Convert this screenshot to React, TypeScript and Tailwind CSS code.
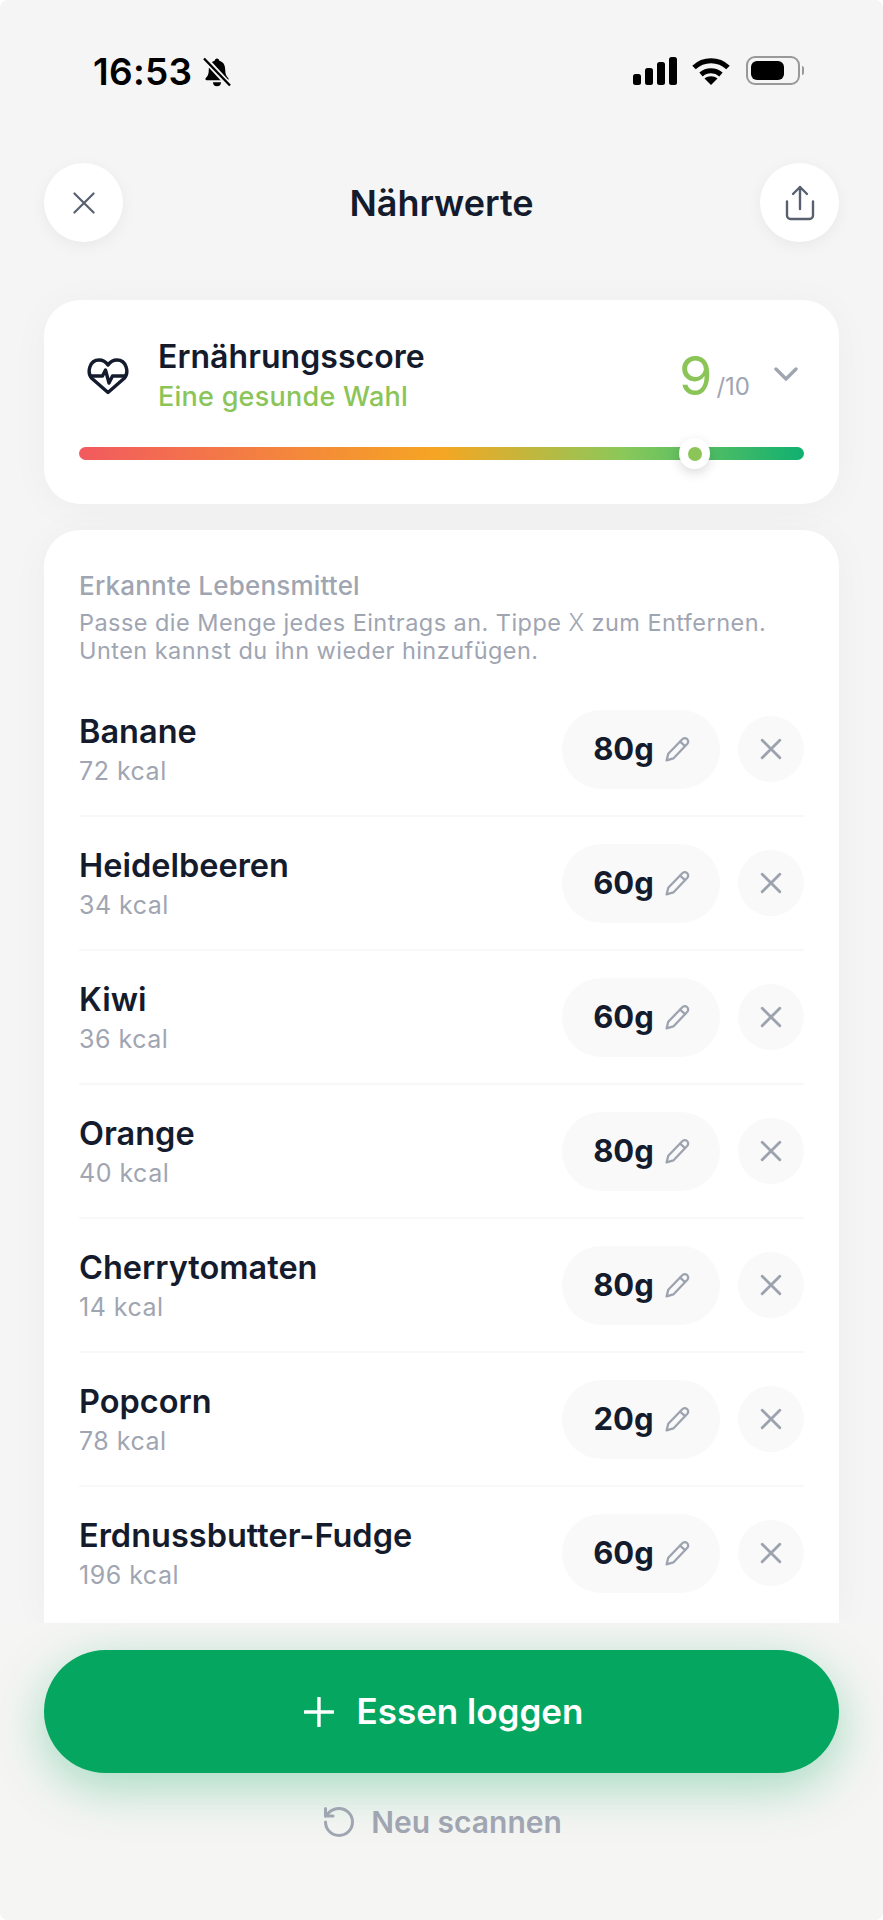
import { RotateCcw } from "lucide-react";

const foods = [
  { name: "Banane", kcal: "72 kcal", amount: "80g" },
  { name: "Heidelbeeren", kcal: "34 kcal", amount: "60g" },
  { name: "Kiwi", kcal: "36 kcal", amount: "60g" },
  { name: "Orange", kcal: "40 kcal", amount: "80g" },
  { name: "Cherrytomaten", kcal: "14 kcal", amount: "80g" },
  { name: "Popcorn", kcal: "78 kcal", amount: "20g" },
  { name: "Erdnussbutter-Fudge", kcal: "196 kcal", amount: "60g" },
];

function Cross({ size, stroke, className }: { size: number; stroke: number; className?: string }) {
  return (
    <svg width={size} height={size} viewBox="0 0 20 20" fill="none" stroke="currentColor" strokeWidth={stroke} strokeLinecap="round" className={className}>
      <path d="M2 2l16 16M18 2L2 18" />
    </svg>
  );
}

function PencilIcon() {
  return (
    <svg width="27" height="27" viewBox="0 0 26 26" fill="none" stroke="currentColor" strokeWidth="2.2" strokeLinejoin="round" strokeLinecap="round" className="text-[#9ca3af]">
      <path d="M2.5 23.5l1.6-6.400L17.600 3.200a3.200 3.200 0 0 1 4.900 4.300L9 21.600z" />
      <path d="M15.500 5.500l4.800 4.200" />
    </svg>
  );
}

function HeartIcon() {
  return (
    <svg width="42" height="38" viewBox="0 0 42 38" fill="none" stroke="#141b2d" strokeWidth="3.400" strokeLinejoin="round" strokeLinecap="round">
      <path d="M21 35.500L5 21.500C-.5 15.500 2.500 3 12 3c4 0 7 2 9 5 2-3 5-5 9-5 9.500 0 12.500 12.500 7 18.500z" />
      <path d="M4 19h11.500l3-6 3.500 13 3.500-7H38" />
    </svg>
  );
}

function BellSlash() {
  return (
    <svg width="30" height="30" viewBox="0 0 30 30">
      <path d="M15 1.500c-1.300 0-2.200 1-2.300 2.200C8.800 4.800 6.800 8 6.800 12.500c0 4.500-1 6.600-3 8.600-.8.800-.3 2.200 1 2.200h20.400c1.300 0 1.800-1.400 1-2.200-2-2-3-4.100-3-8.600 0-4.500-2-7.700-5.900-8.800-.1-1.200-1-2.200-2.300-2.200z" fill="#000" />
      <path d="M11 25.200a4 4 0 0 0 8 0z" fill="#000" />
      <path d="M2.500 1.500l25 27" stroke="#f5f5f5" strokeWidth="6" />
      <path d="M2 1.500l26 27" stroke="#000" strokeWidth="2.400" />
    </svg>
  );
}

function StatusIcons() {
  return (
    <div className="flex items-center">
      <svg width="44" height="28" viewBox="0 0 44 28" fill="#000">
        <rect x="0" y="17" width="8" height="11" rx="2.500" />
        <rect x="12" y="11" width="8" height="17" rx="2.500" />
        <rect x="24" y="5" width="8" height="23" rx="2.500" />
        <rect x="36" y="0" width="8" height="28" rx="2.500" />
      </svg>
      <svg width="38" height="28" viewBox="0 0 38 28" className="ml-[15px]" fill="none" stroke="#000" strokeWidth="5">
        <path d="M2 10.500C11.500 1.500 26.500 1.500 36 10.500" />
        <path d="M9 17.500c5.700-5 14.300-5 20 0" />
        <path d="M19 28l-6.500-6.500c3.700-3 9.300-3 13 0z" fill="#000" stroke="none" />
      </svg>
      <div className="ml-[16px] flex h-[29px] w-[54px] items-center rounded-[9px] border-2 border-[#999999] p-[3px]">
        <div className="h-full w-[33px] rounded-[6px] bg-black" />
      </div>
      <div className="ml-[2px] h-[9px] w-[2px] rounded-r-full bg-[#999999]" />
    </div>
  );
}

export default function App() {
  return (
    <div className="h-[1920px] w-full bg-white font-['Inter',sans-serif]">
      <div className="flex h-full flex-col overflow-hidden rounded-[8px] bg-[#f5f5f5]">
        <div className="flex h-[163px] shrink-0 items-start justify-between pl-[93px] pr-[79px] pt-[56px]">
          <div className="flex items-center gap-[10px]">
            <span className="text-[37px] font-semibold leading-[32px] tracking-[0.3px] text-black">16:53</span>
            <BellSlash />
          </div>
          <StatusIcons />
        </div>

        <div className="mb-[35px] flex h-[79px] shrink-0 items-center justify-between px-[44px]">
          <button type="button" className="flex h-[79px] w-[79px] items-center justify-center rounded-full bg-white text-[#586070] shadow-[0_4px_16px_rgba(0,0,0,0.05)]">
            <Cross size={24} stroke={1.800} />
          </button>
          <h1 className="text-[36px] font-semibold text-[#141b2d]">Nährwerte</h1>
          <button type="button" className="flex h-[79px] w-[79px] items-center justify-center rounded-full bg-white text-[#586070] shadow-[0_4px_16px_rgba(0,0,0,0.05)]">
            <svg width="30" height="36" viewBox="0 0 30 36" fill="none" stroke="currentColor" strokeWidth="2.400" strokeLinecap="round" strokeLinejoin="round">
              <path d="M2 16.500v14a3.500 3.500 0 0 0 3.500 3.500h19a3.500 3.500 0 0 0 3.500-3.500v-14" />
              <path d="M15 24V2M8 9l7-7 7 7" />
            </svg>
          </button>
        </div>

        <div className="flex min-h-0 flex-1 flex-col gap-[26px] overflow-hidden px-[44px] pt-[23px]">
          <section className="shrink-0 rounded-[36px] bg-white px-[35px] pb-[44px] pt-[37px] shadow-[0_4px_40px_rgba(0,0,0,0.035)]">
            <div className="flex items-center">
              <div className="ml-[8px] mr-[29px] flex w-[42px] justify-center">
                <HeartIcon />
              </div>
              <div className="flex-1">
                <h2 className="text-[32px] font-semibold leading-[40px] tracking-[0.05px] text-[#141b2d]">Ernährungsscore</h2>
                <p className="mt-[3px] text-[27px] font-medium leading-[34px] tracking-[0.25px] text-[#8bc558]">Eine gesunde Wahl</p>
              </div>
              <div className="flex items-baseline">
                <span className="text-[54px] font-normal leading-[60px] text-[#8bc558]">9</span>
                <span className="ml-[4px] text-[24px] text-[#a0a5b2]">/10</span>
              </div>
              <svg width="24" height="14" viewBox="0 0 24 14" fill="none" stroke="#a0a5b2" strokeWidth="3.400" strokeLinecap="round" strokeLinejoin="round" className="mb-[4px] ml-[24px] mr-[6px]">
                <path d="M2 2l10 10L22 2" />
              </svg>
            </div>
            <div className="relative mt-[33px] h-[13px] rounded-full bg-[linear-gradient(90deg,#f25a5f_0%,#f5a623_50%,#8bc85a_75%,#10b070_100%)]">
              <div className="absolute left-[600px] top-[-9px] z-10 flex h-[31px] w-[31px] items-center justify-center rounded-full bg-white shadow-[0_4px_12px_rgba(0,0,0,0.14)]">
                <div className="h-[14px] w-[14px] rounded-full bg-[#8bc558]" />
              </div>
            </div>
          </section>

          <section className="shrink-0 rounded-t-[36px] bg-white px-[35px] pt-[40px] shadow-[0_4px_40px_rgba(0,0,0,0.035)]">
            <h3 className="text-[26px] font-medium leading-[32px] tracking-[0.2px] text-[#a0a5b2]">Erkannte Lebensmittel</h3>
            <p className="mb-[18px] mt-[7px] text-[23.500px] leading-[28px] tracking-[0.45px] text-[#a0a5b2]">
              Passe die Menge jedes Eintrags an. Tippe <span className="font-light">X</span> zum Entfernen.
              <br />
              Unten kannst du ihn wieder hinzufügen.
            </p>
            {foods.map((food) => (
              <div key={food.name} className="flex h-[134px] items-center justify-between border-b-2 border-[#f8f8f9]">
                <div>
                  <p className="text-[32.500px] font-semibold leading-[40px] text-[#141b2d]">{food.name}</p>
                  <p className="mt-[4px] text-[25px] leading-[30px] tracking-[0.5px] text-[#a0a5b2]">{food.kcal}</p>
                </div>
                <div className="flex items-center gap-[18px]">
                  <div className="flex h-[79px] w-[158px] items-center justify-center gap-[10px] rounded-full bg-[#f9f9fa] pl-[2px]">
                    <span className="text-[31px] font-bold text-[#141b2d]">{food.amount}</span>
                    <PencilIcon />
                  </div>
                  <button type="button" className="flex h-[66px] w-[66px] items-center justify-center rounded-full bg-[#f9f9fa] text-[#9ca3af]">
                    <Cross size={22} stroke={2.600} />
                  </button>
                </div>
              </div>
            ))}
          </section>
        </div>

        <div className="relative z-10 h-[297px] shrink-0 bg-[#f5f5f3] px-[44px] pt-[27px]">
          <div className="absolute inset-x-[44px] top-[-30px] h-[30px] bg-gradient-to-b from-transparent to-white/90" />
          <button type="button" className="flex h-[123px] w-full items-center justify-center gap-[23px] rounded-full bg-[#05a660] pl-[4px] text-white shadow-[0_14px_50px_rgba(5,166,96,0.34)]">
            <svg width="30" height="30" viewBox="0 0 30 30" fill="none" stroke="currentColor" strokeWidth="3.400" strokeLinecap="round">
              <path d="M15 1v28M1 15h28" />
            </svg>
            <span className="text-[35px] font-semibold">Essen loggen</span>
          </button>
          <div className="mt-[29px] flex items-center justify-center gap-[14px] text-[#a0a5b2]">
            <RotateCcw size={36} strokeWidth={2} />
            <span className="text-[30px] font-semibold leading-[40px]">Neu scannen</span>
          </div>
        </div>
      </div>
    </div>
  );
}
